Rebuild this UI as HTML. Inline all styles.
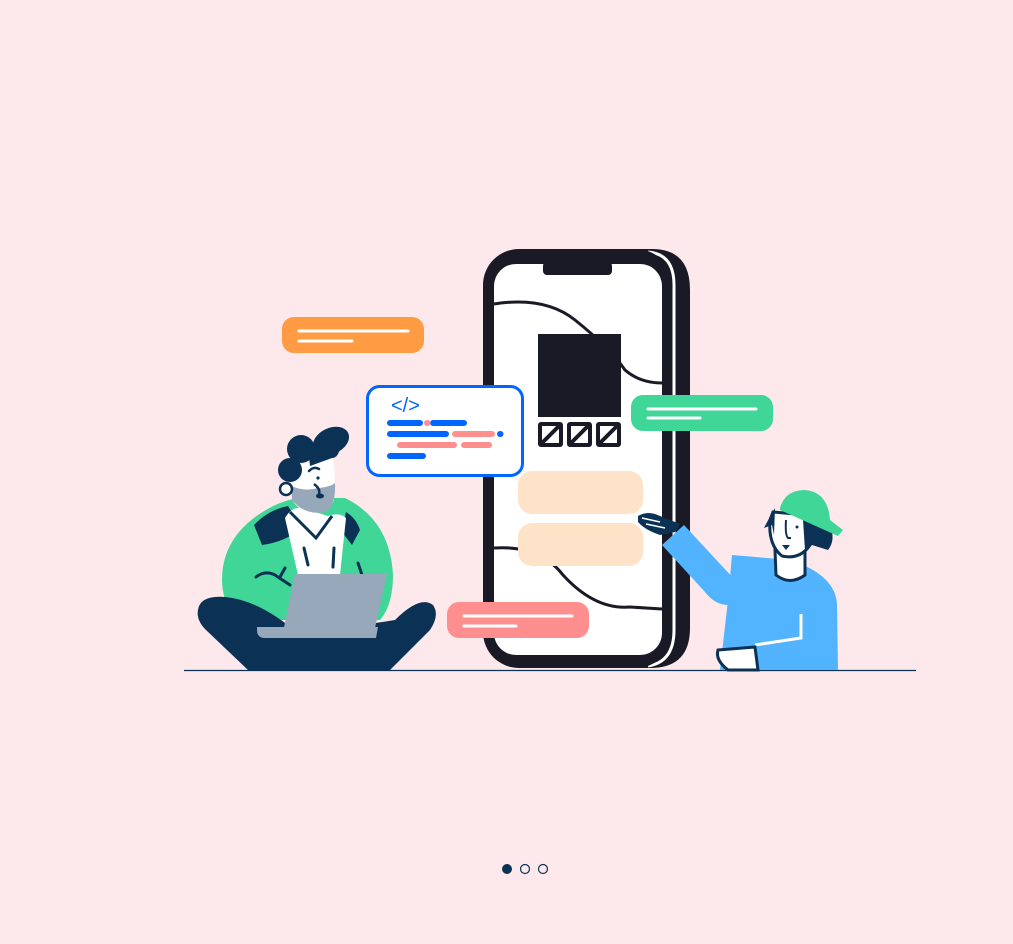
<!DOCTYPE html>
<html><head><meta charset="utf-8"><style>
html,body{margin:0;padding:0;background:#fde9ec;width:1013px;height:944px;overflow:hidden}
svg{display:block}
</style></head><body>
<svg width="1013" height="944" viewBox="0 0 1013 944" xmlns="http://www.w3.org/2000/svg">
<rect width="1013" height="944" fill="#fde9ec"/>
<!-- phone back -->
<path d="M520 249 H652 Q690 249 690 290 V628 Q690 668 650 668 H520 Z" fill="#1a1a26"/>
<path d="M648 252 Q674 254 674 285 V630 Q674 662 648 666" fill="none" stroke="#fff" stroke-width="3"/>
<rect x="483" y="249" width="189" height="419" rx="36" fill="#1a1a26"/>
<rect x="494" y="264" width="168" height="391" rx="22" fill="#fff"/>
<rect x="543" y="262" width="69" height="13" rx="4" fill="#1a1a26"/>
<path d="M494 304 Q545 296 575 320 Q610 348 625 370 Q640 383 662 383" fill="none" stroke="#1a1a26" stroke-width="3"/>
<path d="M494 548 Q540 545 563 575 Q595 610 630 607 L662 609" fill="none" stroke="#1a1a26" stroke-width="3"/>
<rect x="538" y="334" width="83" height="83" fill="#1a1a26"/>
<g fill="none" stroke="#1a1a26" stroke-width="4">
<rect x="540" y="424" width="21" height="21" rx="1"/><path d="M541 444 L560 425"/>
<rect x="569" y="424" width="21" height="21" rx="1"/><path d="M570 444 L589 425"/>
<rect x="598" y="424" width="21" height="21" rx="1"/><path d="M599 444 L618 425"/>
</g>
<rect x="518" y="471" width="125" height="43" rx="14" fill="#fee3c8"/>
<rect x="518" y="523" width="125" height="43" rx="14" fill="#fee3c8"/>
<!-- bubbles -->
<rect x="282" y="317" width="142" height="36" rx="12" fill="#ff9b42"/>
<g stroke="#fff" stroke-width="3" stroke-linecap="round"><path d="M299 331H408M299 341H352"/></g>
<rect x="631" y="395" width="142" height="36" rx="12" fill="#3fd698"/>
<g stroke="#fff" stroke-width="3" stroke-linecap="round"><path d="M648 409H756M648 418H700"/></g>
<rect x="447" y="602" width="142" height="36" rx="12" fill="#ff8f8f"/>
<g stroke="#fff" stroke-width="3" stroke-linecap="round"><path d="M464 616H572M464 626H516"/></g>
<rect x="367.5" y="386.5" width="155" height="89" rx="12" fill="#fff" stroke="#0066ff" stroke-width="3"/>
<text x="391" y="412" font-family="Liberation Sans, sans-serif" font-size="20" fill="#0066ff">&lt;/&gt;</text>
<g stroke-width="6" stroke-linecap="round">
<path d="M390 423H420M433 423H464M390 434H446M390 456H423" stroke="#0066ff"/>
<path d="M427 423H427.5M455 434H492M400 445H454M464 445H489" stroke="#ff8f8f"/>
<path d="M500 434H500.5" stroke="#0066ff"/>
</g>
<!-- ground -->
<path d="M184 670.5H916" stroke="#0b3254" stroke-width="1.2"/>
<!-- man -->
<path d="M222 580 Q222 540 258 515 Q280 500 300 498 L345 498 Q390 520 393 575 Q393 605 380 620 L235 620 Q222 600 222 580Z" fill="#3fd698"/>
<path d="M254 525 Q268 510 288 506 L302 528 Q285 542 262 545Z" fill="#0b3254"/>
<path d="M346 512 Q356 518 360 530 L352 545 L342 532Z" fill="#0b3254"/>
<path d="M285 518 Q292 506 302 508 L328 516 Q340 512 346 518 L340 575 L298 575Z" fill="#fff"/>
<path d="M290 512 L316 538 L332 516" fill="none" stroke="#0b3254" stroke-width="3"/>
<path d="M304 548 L308 565 M334 548 L333 567 M358 563 L362 575 M256 577 Q265 570 275 575 L290 585 M280 577 L285 568" fill="none" stroke="#0b3254" stroke-width="3" stroke-linecap="round"/>
<path d="M296 466 L332 456 Q336 470 334 490 L334 500 Q330 512 312 512 Q295 510 290 495 Z" fill="#fff"/>
<path d="M291 486 Q305 492 318 488 Q330 487 335 483 Q336 505 326 512 Q305 516 292 500Z" fill="#97a8bb"/>
<circle cx="286" cy="489" r="6" fill="#fff" stroke="#0b3254" stroke-width="2.5"/>
<g fill="#0b3254">
<ellipse cx="331" cy="441" rx="19" ry="13" transform="rotate(-25 331 441)"/>
<path d="M308 446 Q325 440 340 448 Q338 458 332 458 L310 466Z"/>
<circle cx="301" cy="449" r="14"/>
<circle cx="290" cy="470" r="12"/>
<ellipse cx="320" cy="496" rx="4" ry="2.5"/>
<circle cx="318" cy="478" r="1.6"/>
</g>
<path d="M314 484 Q322 490 318 496" fill="none" stroke="#0b3254" stroke-width="2.5"/>
<path d="M309 471 Q314 466 319 469" fill="none" stroke="#0b3254" stroke-width="2.5" stroke-linecap="round"/>
<path d="M198 610 Q200 595 225 597 Q260 600 300 635 L395 620 Q420 595 433 605 Q440 615 430 630 L390 670 L248 670 L206 630 Q196 620 198 610Z" fill="#0b3254"/>
<path d="M295 574 H387 L373 637 H282 Z" fill="#97a8bb"/>
<path d="M257 627 H378 L376 638 H265 Q257 638 257 630Z" fill="#97a8bb"/>
<!-- boy -->
<path d="M732 555 L790 560 Q836 575 837 605 L838 670 L720 670 L728 600Z" fill="#52b4ff"/>
<path d="M662 545 L684 525 L735 580 Q745 600 728 605 Q715 605 705 592Z" fill="#52b4ff"/>
<path d="M638 516 Q648 510 660 516 L680 524 L675 532 L660 535 Q645 530 638 522Z" fill="#0b3254"/>
<path d="M642 518 L660 522 M646 524 L665 528" stroke="#fff" stroke-width="1.5"/>
<path d="M801 614 V638 L755 645" fill="none" stroke="#fff" stroke-width="3"/>
<path d="M718 650 L755 647 L758 670 L728 670 Q715 660 718 650Z" fill="#fff" stroke="#0b3254" stroke-width="3"/>
<path d="M775 550 L776 575 Q790 586 805 575 L805 550Z" fill="#fff" stroke="#0b3254" stroke-width="3"/>
<path d="M773 512 L808 515 L810 545 Q800 560 782 556 Q768 545 770 520Z" fill="#fff" stroke="#0b3254" stroke-width="3"/>
<path d="M775 508 Q768 520 764 528 L772 525 L774 535 Z M800 512 L830 525 Q836 540 828 550 L812 545 L805 550 L803 520Z" fill="#0b3254"/>
<path d="M780 508 Q785 490 805 490 Q828 492 830 520 L843 530 L838 536 L780 510Z" fill="#3fd698"/>
<path d="M786 520 Q785 535 788 538 L791 538" fill="none" stroke="#0b3254" stroke-width="2"/>
<path d="M782 545 L790 545 L786 550Z" fill="#0b3254"/>
<circle cx="797" cy="527" r="1.5" fill="#0b3254"/>
<!-- dots -->
<circle cx="507" cy="869" r="5" fill="#0b3254"/>
<circle cx="525" cy="869" r="4.5" fill="none" stroke="#0b3254" stroke-width="1.2"/>
<circle cx="543" cy="869" r="4.5" fill="none" stroke="#0b3254" stroke-width="1.2"/>
</svg>
</body></html>
